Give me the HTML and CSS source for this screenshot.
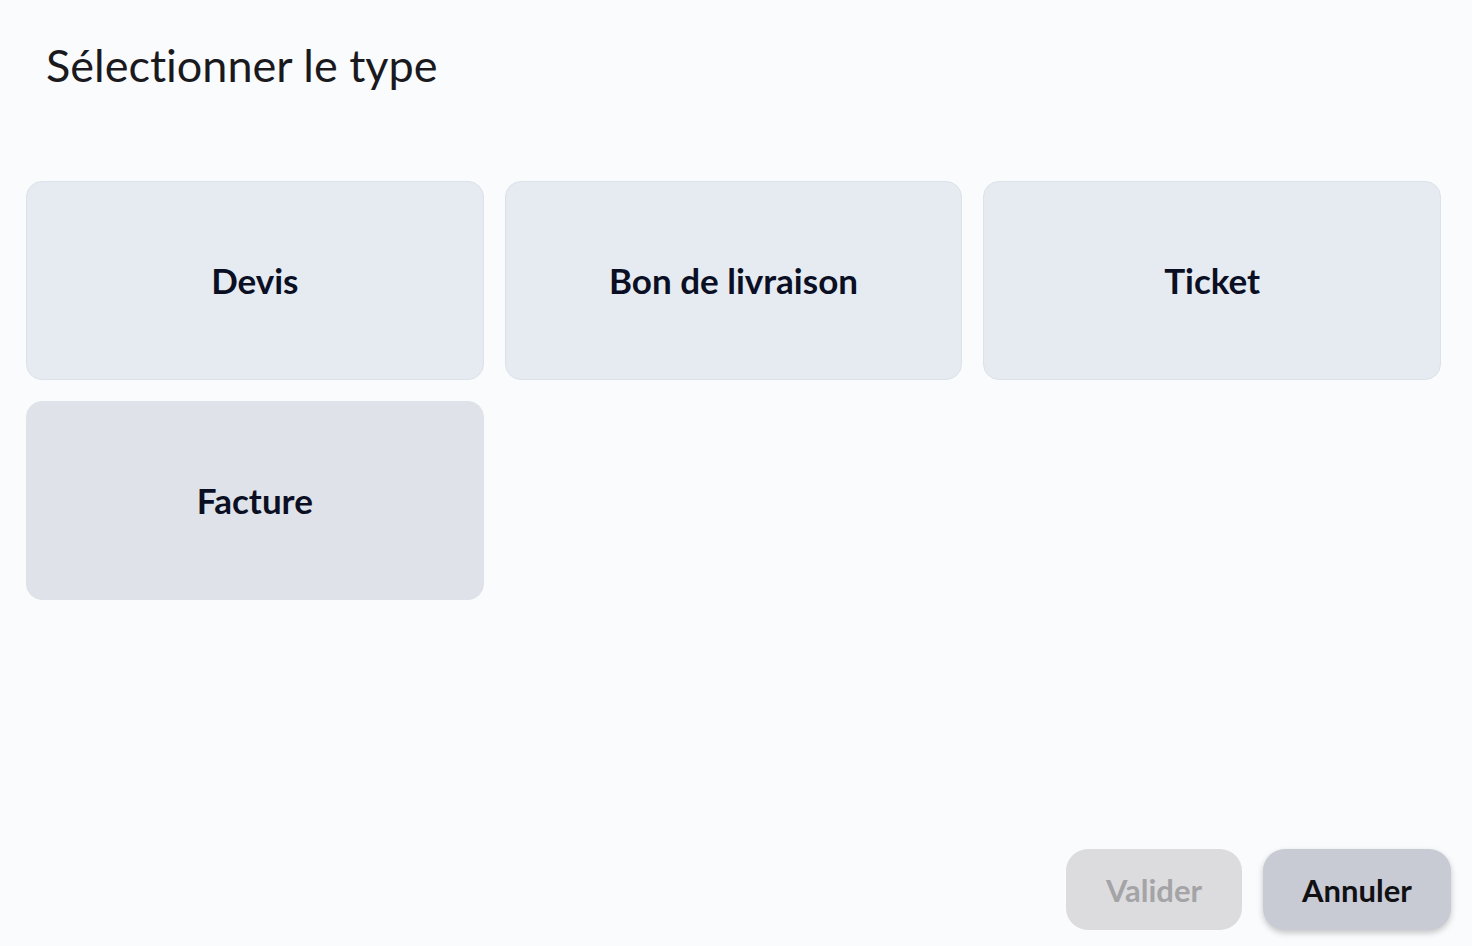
FILE: index.html
```html
<!DOCTYPE html>
<html lang="fr">
<head>
    <meta charset="UTF-8">
    <meta name="viewport" content="width=device-width, initial-scale=1.0">
    <title>Sélectionner le type</title>
    <link rel="stylesheet" href="styles.css">
</head>
<body>
    <div class="dialog">
        <h1 class="dialog-title">Sélectionner le type</h1>

        <div class="type-grid">
            <button class="type-card">Devis</button>
            <button class="type-card">Bon de livraison</button>
            <button class="type-card">Ticket</button>
            <button class="type-card hovered">Facture</button>
        </div>

        <div class="actions">
            <button class="btn btn-validate" disabled>Valider</button>
            <button class="btn btn-cancel">Annuler</button>
        </div>
    </div>
</body>
</html>
```

FILE: styles.css
```css
/* Page */
* {
    box-sizing: border-box;
}
body {
    margin: 0;
    height: 100vh;
    background: #fafbfd;
    font-family: 'Lato', 'Open Sans', sans-serif;
    font-variant-ligatures: none;
    color: #15151a;
}
.dialog {
    height: 100%;
    display: flex;
    flex-direction: column;
}
.dialog-title {
    margin: 0;
    padding: 37px 0 0 46px;
    font-size: 45px;
    font-weight: 400;
    line-height: 56px;
    color: #1a1a1e;
}

/* Type cards */
.type-grid {
    display: grid;
    grid-template-columns: repeat(3, 1fr);
    grid-auto-rows: 199px;
    gap: 21px;
    padding: 0 31px 0 26px;
    margin-top: 88px;
}
.type-card {
    font-family: inherit;
    font-variant-ligatures: none;
    font-size: 35px;
    font-weight: 700;
    color: #0b0f24;
    background: #e6ebf1;
    border: 1px solid #dce2e9;
    border-radius: 16px;
    padding: 0 0 2px;
    cursor: pointer;
}
.type-card.hovered {
    background: #dfe3e9;
    border-color: #dfe3e9;
}

/* Footer buttons */
.actions {
    margin-top: auto;
    display: flex;
    justify-content: flex-end;
    gap: 21px;
    padding: 0 21px 16px 0;
}
.btn {
    height: 81px;
    border: none;
    border-radius: 22px;
    font-family: inherit;
    font-size: 31px;
    font-weight: 700;
    cursor: pointer;
}
.btn-validate {
    width: 176px;
    background: #dcdcdf;
    color: #a4a4a7;
    cursor: default;
}
.btn-cancel {
    width: 188px;
    background: #c8cad4;
    color: #111114;
    box-shadow: 0 3px 6px rgba(0, 0, 0, 0.22);
}
```
